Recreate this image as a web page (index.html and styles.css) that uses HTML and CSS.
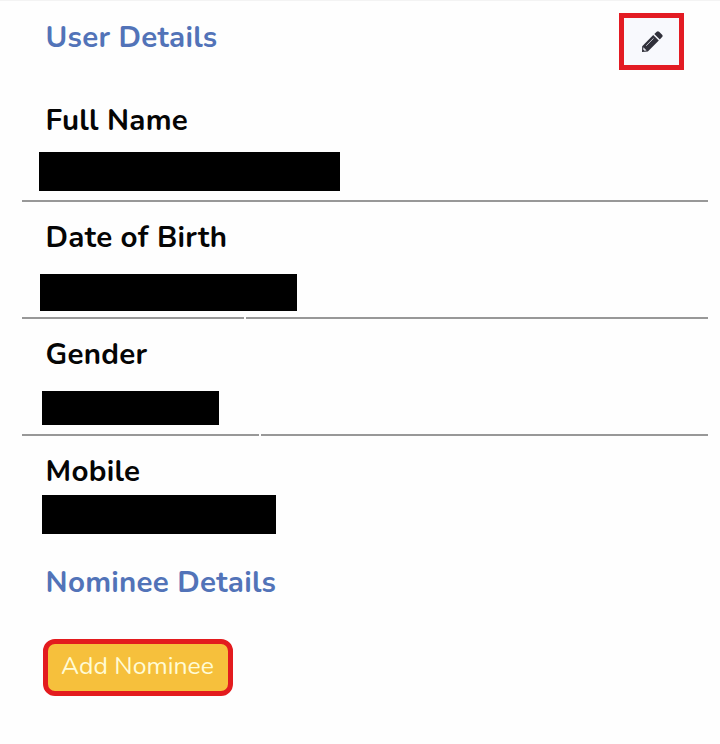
FILE: index.html
```
<!DOCTYPE html>
<html lang="en">
<head>
<meta charset="utf-8">
<title>User Details</title>
<link rel="stylesheet" href="styles.css">
</head>
<body>
<main class="page">
  <header class="header">
    <h1 class="heading user">User Details</h1>
    <button class="edit" aria-label="Edit">
      <svg width="22" height="22" viewBox="0 0 22 22">
        <path d="M1.2 15.2 12.2 4.1 17.8 9.5 6.8 20.4 1 21Z" fill="#30303a"/>
        <path d="m13.3 3 2.4-2.3q1.2-1 2.4 0l3 3q1 1.2 0 2.3l-2.3 2.5Z" fill="#30303a"/>
        <path d="m5.2 14.7 7.3-7.3" stroke="#c8c8d0" stroke-width="1"/>
        <path d="m2.4 16.3 3.2 3.1-2.2.3-1.2-1.2Z" fill="#e4e4ea"/>
      </svg>
    </button>
  </header>
  <section class="field name">
    <h2 class="label">Full Name</h2>
    <div class="value"></div>
    <div class="rule"><i></i></div>
  </section>
  <section class="field birth">
    <h2 class="label">Date of Birth</h2>
    <div class="value"></div>
    <div class="rule"><i></i><i></i></div>
  </section>
  <section class="field gender">
    <h2 class="label">Gender</h2>
    <div class="value"></div>
    <div class="rule"><i></i><i></i></div>
  </section>
  <section class="field mobile">
    <h2 class="label">Mobile</h2>
    <div class="value"></div>
  </section>
  <h1 class="heading nominee">Nominee Details</h1>
  <button class="add"><span>Add Nominee</span></button>
</main>
</body>
</html>
```
FILE: styles.css
```
* { box-sizing: border-box; }
body {
  margin: 0;
  background: #fefefe;
  font-family: Nunito, "Open Sans", "Noto Sans", sans-serif;
}
.page {
  height: 744px;
  border-top: 1px solid #f3f3f3;
  overflow: hidden;
}
.header {
  display: flex;
  justify-content: space-between;
  align-items: flex-start;
  height: 84px;
  padding: 12px 36px 0 0;
}
.heading, .label {
  margin: 0;
  padding-left: 45.6px;
  font-size: 29.5px;
  line-height: 42px;
  font-weight: 700;
  letter-spacing: .25px;
  white-space: nowrap;
}
.heading { color: #5273b8; }
.label { color: #050505; }
.user { margin-top: 3px; }
.edit {
  display: grid;
  place-items: center;
  width: 65px;
  height: 57px;
  padding: 0;
  border: 5px solid #e31b23;
  background: #f8f9fd;
}
.field {
  display: flex;
  flex-direction: column;
  height: 117px;
  padding-top: 14px;
}
.value { background: #000; }
.name .value { width: 301px; height: 39px; margin: 11px 0 0 39px; }
.birth .value { width: 257px; height: 37px; margin: 16px 0 0 40px; }
.gender .value { width: 177px; height: 34px; margin: 16px 0 0 42px; }
.mobile .value { width: 234px; height: 39px; margin: 3px 0 0 42px; }
.rule {
  display: flex;
  gap: 2px;
  height: 2px;
  margin: auto 12px 0 22px;
}
.rule i { flex: 1; background: #989898; }
.birth .rule i:first-child { flex: 0 0 222px; }
.gender .rule i:first-child { flex: 0 0 237px; }
.mobile { height: 125px; }
.add {
  display: block;
  width: 190px;
  height: 57px;
  margin: 36px 0 0 43px;
  padding: 0;
  border: 5px solid #e31b1e;
  border-radius: 12px;
  background: #f6c03c;
  color: #fffbd5;
  font: 400 24.8px/44px Nunito, "Open Sans", "Noto Sans", sans-serif;
  white-space: nowrap;
}
.add span { display: block; margin: -3px 1px 0 0; }
```
